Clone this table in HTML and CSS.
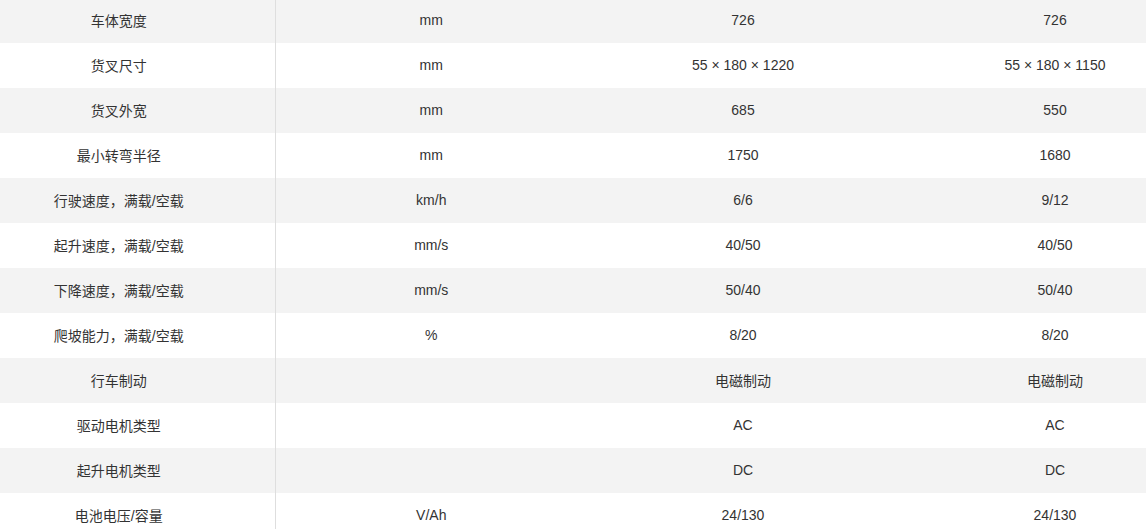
FILE: index.html
```html
<!DOCTYPE html>
<html lang="zh">
<head>
<meta charset="utf-8">
<link rel="stylesheet" href="styles.css">
</head>
<body>
<table class="spec">
  <tbody>
    <tr><td>车体宽度</td><td>mm</td><td>726</td><td>726</td></tr>
    <tr><td>货叉尺寸</td><td>mm</td><td>55 × 180 × 1220</td><td>55 × 180 × 1150</td></tr>
    <tr><td>货叉外宽</td><td>mm</td><td>685</td><td>550</td></tr>
    <tr><td>最小转弯半径</td><td>mm</td><td>1750</td><td>1680</td></tr>
    <tr><td>行驶速度，满载/空载</td><td>km/h</td><td>6/6</td><td>9/12</td></tr>
    <tr><td>起升速度，满载/空载</td><td>mm/s</td><td>40/50</td><td>40/50</td></tr>
    <tr><td>下降速度，满载/空载</td><td>mm/s</td><td>50/40</td><td>50/40</td></tr>
    <tr><td>爬坡能力，满载/空载</td><td>%</td><td>8/20</td><td>8/20</td></tr>
    <tr><td>行车制动</td><td></td><td>电磁制动</td><td>电磁制动</td></tr>
    <tr><td>驱动电机类型</td><td></td><td>AC</td><td>AC</td></tr>
    <tr><td>起升电机类型</td><td></td><td>DC</td><td>DC</td></tr>
    <tr><td>电池电压/容量</td><td>V/Ah</td><td>24/130</td><td>24/130</td></tr>
  </tbody>
</table>
</body>
</html>
```

FILE: styles.css
```css
html, body {
  margin: 0;
  padding: 0;
  background: #fff;
  overflow: hidden;
}
body {
  font-family: "Liberation Sans", Arial, "Noto Sans CJK SC", sans-serif;
  font-size: 14px;
  color: #333;
}
.spec {
  border-collapse: collapse;
  table-layout: fixed;
  width: 1248px;
  margin-left: -37px;
  margin-top: -2px;
}
.spec td {
  height: 45px;
  padding: 0 0 2px;
  box-sizing: border-box;
  text-align: center;
  vertical-align: middle;
  width: 25%;
}
.spec td:first-child {
  border-right: 1px solid #dedede;
}
.spec tr:nth-child(odd) td {
  background: #f3f3f3;
}
```
